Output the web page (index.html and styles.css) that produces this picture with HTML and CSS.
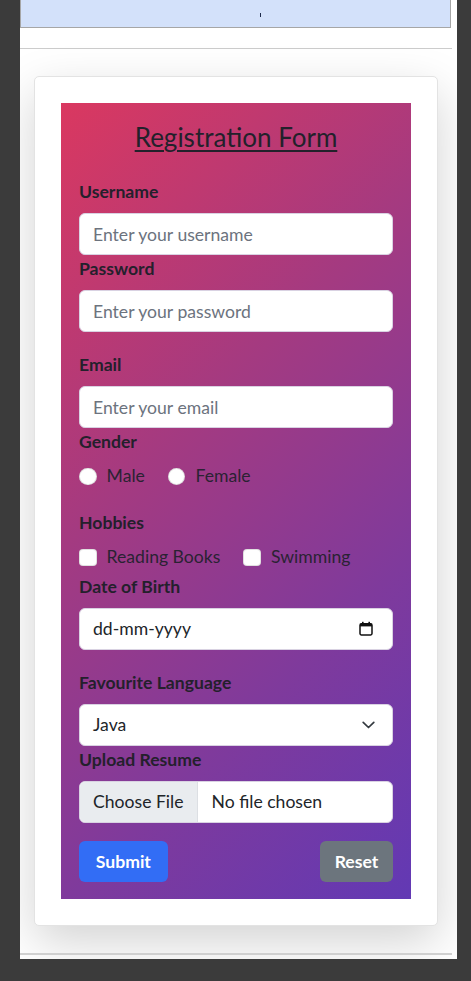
FILE: index.html
```
<!DOCTYPE html>
<html lang="en">
<head>
<meta charset="utf-8">
<title>Registration Form</title>
<link rel="stylesheet" href="styles.css">
</head>
<body>
<div class="page">
  <div class="topbar"><span class="caret"></span></div>
  <div class="rule"></div>
  <div class="card">
    <form class="reg">
      <h2 class="title">Registration Form</h2>

      <label class="lbl">Username</label>
      <input class="field" type="text" placeholder="Enter your username">

      <label class="lbl">Password</label>
      <input class="field spaced" type="password" placeholder="Enter your password">

      <label class="lbl">Email</label>
      <input class="field" type="email" placeholder="Enter your email">

      <div class="lbl">Gender</div>
      <div class="opts spaced">
        <span class="opt"><span class="radio"></span>Male</span>
        <span class="opt"><span class="radio"></span>Female</span>
      </div>

      <div class="lbl">Hobbies</div>
      <div class="opts small-gap">
        <span class="opt"><span class="check"></span>Reading Books</span>
        <span class="opt"><span class="check"></span>Swimming</span>
      </div>

      <label class="lbl">Date of Birth</label>
      <div class="field box spaced">
        <span class="val">dd-mm-yyyy</span>
        <svg class="cal" width="14" height="15" viewBox="0 0 14 15" aria-hidden="true">
          <rect x="1" y="2.8" width="12" height="11.2" rx="1.4" fill="none" stroke="#111" stroke-width="1.5"/>
          <rect x="1" y="2.8" width="12" height="2.6" fill="#111"/>
          <rect x="3" y="0.8" width="1.6" height="3" fill="#111"/>
          <rect x="9.4" y="0.8" width="1.6" height="3" fill="#111"/>
        </svg>
      </div>

      <label class="lbl">Favourite Language</label>
      <div class="field box">
        <span class="val">Java</span>
        <svg class="chev" width="13" height="8" viewBox="0 0 13 8" aria-hidden="true">
          <path d="M1.2 1.3 L6.5 6.5 L11.8 1.3" fill="none" stroke="#343a40" stroke-width="1.7" stroke-linecap="round" stroke-linejoin="round"/>
        </svg>
      </div>

      <label class="lbl">Upload Resume</label>
      <div class="field file">
        <span class="file-btn">Choose File</span>
        <span class="file-name">No file chosen</span>
      </div>

      <div class="actions">
        <button type="button" class="btn primary">Submit</button>
        <button type="button" class="btn secondary">Reset</button>
      </div>
    </form>
  </div>
  <div class="rule thick"></div>
</div>
</body>
</html>
```
FILE: styles.css
```
* { box-sizing: border-box; }

html, body {
  margin: 0;
  padding: 0;
}

body {
  background: #3b3b3b;
  font-family: Lato, "Noto Sans", "Liberation Sans", sans-serif;
  color: #212529;
  height: 981px;
  overflow: hidden;
}

.page {
  margin-left: 20px;
  width: 437px;
  height: 959px;
  background: #fff;
  overflow: hidden;
}

.topbar {
  width: 431px;
  height: 28px;
  background: #d3e1fa;
  border-left: 1px solid #a6a6a6;
  border-right: 1px solid #a6a6a6;
  border-bottom: 1px solid #a6a6a6;
  display: flex;
  padding: 13px 0 0 239px;
}

.caret {
  width: 1px;
  height: 4px;
  background: #1d2a4a;
}

.rule {
  margin-top: 20px;
  width: 432px;
  height: 1px;
  background: #cccccc;
}

.rule.thick {
  margin-top: 27px;
  height: 2px;
  background: #d0d0d0;
}

.card {
  margin: 27px 0 0 14px;
  width: 404px;
  background: #fff;
  border: 1px solid #e3e3e3;
  border-radius: 5px;
  box-shadow: 0 16px 48px rgba(0, 0, 0, 0.175);
  padding: 26px;
}

.reg {
  display: flex;
  flex-direction: column;
  padding: 18px 18px 17.5px;
  background: linear-gradient(135deg, #da3860 0%, #a53a80 38%, #7f3a9c 70%, #6239b4 100%);
}

.title {
  margin: 0 0 26px;
  padding-top: 1px;
  text-align: center;
  font-size: 26px;
  line-height: 30px;
  font-weight: 400;
  text-decoration: underline;
  text-decoration-thickness: 1.5px;
  text-underline-offset: 3px;
  color: #23212b;
}

.lbl {
  display: block;
  font-size: 17.6px;
  line-height: 26.4px;
  font-weight: 700;
  color: #24202c;
  padding-top: 1px;
  margin-bottom: 8px;
}

.field {
  display: block;
  width: 100%;
  height: 41.6px;
  margin: 0;
  padding: 0 13px;
  font-family: inherit;
  font-size: 17.6px;
  line-height: 26.4px;
  color: #212529;
  background: #fff;
  border: 1px solid #d9d2e2;
  border-radius: 6px;
  outline: none;
}

.field::placeholder {
  color: #6c737e;
  opacity: 1;
}

.spaced {
  margin-bottom: 19px;
}

.small-gap {
  margin-bottom: 2px;
}

.opts {
  display: flex;
  align-items: center;
  height: 26.4px;
  font-size: 17.6px;
  line-height: 26.4px;
  color: #2a2233;
}

.opt {
  display: flex;
  align-items: center;
  gap: 10px;
  margin-right: 23px;
}

.radio {
  width: 17.6px;
  height: 17.6px;
  border-radius: 50%;
  background: #fff;
  border: 1px solid rgba(0, 0, 0, 0.12);
}

.check {
  width: 17.6px;
  height: 17.6px;
  border-radius: 4px;
  background: #fff;
  border: 1px solid rgba(0, 0, 0, 0.12);
}

.box {
  display: flex;
  align-items: center;
  justify-content: space-between;
  padding: 0 17px 0 13px;
}

.cal {
  margin-right: 2px;
}

.file {
  display: flex;
  align-items: center;
  padding: 0;
  overflow: hidden;
}

.file-btn {
  height: 100%;
  flex-shrink: 0;
  display: flex;
  align-items: center;
  white-space: nowrap;
  padding: 0 13px;
  min-width: 117.5px;
  background: #e9ecef;
  border-right: 1px solid #dcdfe3;
}

.file-name {
  white-space: nowrap;
  padding-left: 14px;
}

.actions {
  margin-top: 18px;
  display: flex;
  justify-content: space-between;
}

.btn {
  height: 41.4px;
  padding: 0 14.5px;
  border: none;
  border-radius: 6px;
  font-family: inherit;
  font-size: 17.6px;
  font-weight: 700;
  color: #fff;
}

.primary {
  background: #326df5;
  width: 88.7px;
}

.secondary {
  background: #6c757d;
  width: 73px;
}
```
